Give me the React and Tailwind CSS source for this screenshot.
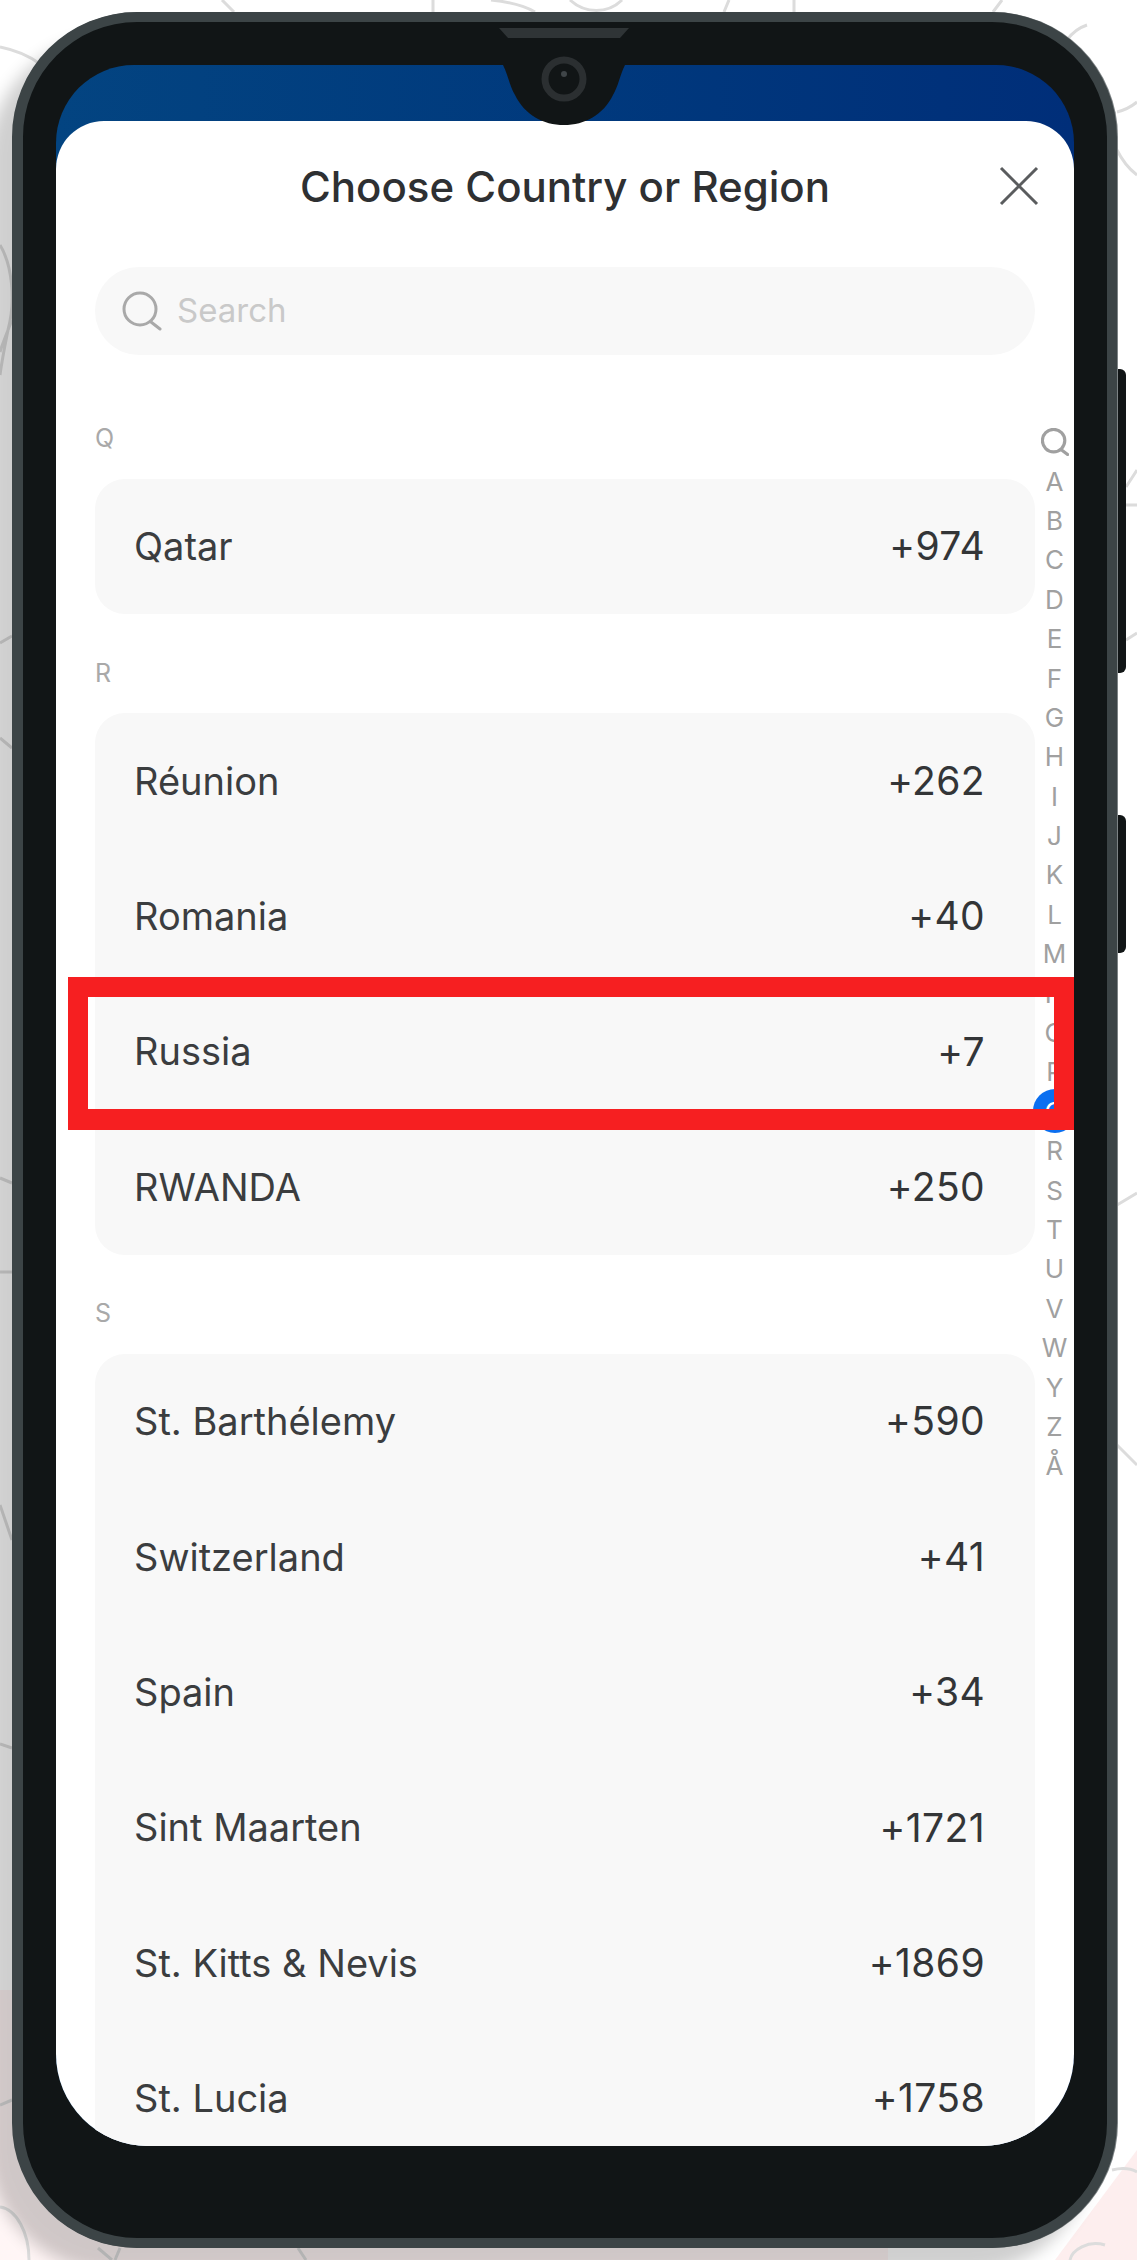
import React from 'react';

const sections = [
  { letter: 'Q', rows: [['Qatar', '+974']] },
  {
    letter: 'R',
    rows: [
      ['Réunion', '+262'],
      ['Romania', '+40'],
      ['Russia', '+7'],
      ['RWANDA', '+250'],
    ],
  },
  {
    letter: 'S',
    rows: [
      ['St. Barthélemy', '+590'],
      ['Switzerland', '+41'],
      ['Spain', '+34'],
      ['Sint Maarten', '+1721'],
      ['St. Kitts & Nevis', '+1869'],
      ['St. Lucia', '+1758'],
    ],
  },
];

const railLetters = 'ABCDEFGHIJKLMNOPQRSTUVWYZÅ'.split('');

const Backdrop = () => (
  <svg className="absolute inset-0" width="1137" height="2260" viewBox="0 0 1137 2260" fill="none">
    <path d="M0 1990H888V2260H0Z" fill="#fff5f5" />
    <path d="M0 2207C16 2209 29 2232 29 2260H0Z" fill="#fff6f6" />
    <path d="M1055 2260L1137 2150V2260Z" fill="#fdeeee" />
    <g stroke="#dcdcdc" strokeWidth="3">
      <path d="M222 0L234 12M433 0V12M491 0C510 2 525 6 535 12" />
      <path d="M570 0C585 14 608 14 622 0M729 0L724 12M794 0V12M1002 0L993 12" />
      <path d="M1087 25C1078 28 1072 33 1067 40M1117 112C1125 110 1131 107 1137 102M1117 150C1122 160 1129 169 1137 175" />
      <path d="M0 47C15 50 28 55 40 64" />
      <path d="M0 245C12 265 16 300 8 330C5 345 2 360 0 375M12 320C6 335 2 345 0 352" />
      <path d="M0 643L12 636M0 738L12 748M0 1178L12 1183M0 1272H12M0 1505L12 1540M0 1744L12 1748M0 2105L12 2100" />
      <path d="M0 2207C16 2209 29 2232 29 2260M98 2248L112 2260M120 2248L115 2260M298 2248L306 2260" />
      <path d="M1126 487L1137 470M1126 505H1137M1126 640L1137 633M1117 1205L1137 1193M1117 1445L1137 1465" />
      <path d="M1112 2170C1120 2168 1130 2168 1137 2172M1070 2260C1072 2250 1088 2240 1105 2245" />
    </g>
  </svg>
);

const Notch = () => (
  <svg className="absolute left-[466px] top-[5px]" width="150" height="118" viewBox="0 0 150 118" fill="none">
    <path d="M14 38H136C131 48 129 60 124 68C114 88 96 98 75 98C54 98 36 88 26 68C21 60 19 48 14 38Z" fill="#111516" />
    <path d="M10 1H140L131 11H19Z" fill="#2f3436" />
    <circle cx="75" cy="52" r="19" stroke="#2b2f31" strokeWidth="7" fill="#111516" />
    <circle cx="75" cy="47" r="3" fill="#3f4548" />
  </svg>
);

const SearchGlyph = ({ className, stroke, width }) => (
  <svg className={className} viewBox="0 0 40 40" fill="none" stroke={stroke} strokeWidth={width} strokeLinecap="round">
    <circle cx="18" cy="18" r="16" />
    <path d="M29 31L38 38" />
  </svg>
);

const Row = ({ name, code }) => (
  <div className="h-[135.4px] pl-[39px] pr-[50px] flex items-center justify-between">
    <span className="text-[38px] text-[#3b3d3f]">{name}</span>
    <span className="text-[39px] tracking-[0.4px] text-[#333537]">{code}</span>
  </div>
);

const App = () => (
  <div className="relative w-[1137px] h-[2260px] overflow-hidden bg-white pt-3 pl-3 font-['Inter',sans-serif]">
    <Backdrop />

    <div className="relative w-[1105px] h-[2236px]">
      <div className="absolute right-[-9px] top-[357px] w-[10px] h-[304px] rounded-r-md bg-[#111516]" />
      <div className="absolute right-[-9px] top-[803px] w-[10px] h-[138px] rounded-r-md bg-[#111516]" />

      <div className="relative h-full rounded-[125px] border-[10px] border-l-[11px] border-[#3c4446] bg-[#111516] pt-[43px] pl-[33px] pr-[33px] shadow-[-24px_24px_16px_rgba(0,0,0,0.19),1px_0_0_#7d8385]">
        <div className="h-[2081px] rounded-t-[78px] rounded-b-[92px] overflow-hidden bg-gradient-to-r from-[#034481] to-[#002e79] pt-[56px]">
          <div className="h-full rounded-t-[48px] overflow-hidden bg-white">
            <div className="relative h-[146px] flex items-center justify-center pb-[16px]">
              <h1 className="text-[42px] font-medium text-[#2e3032]">Choose Country or Region</h1>
              <svg className="absolute left-[943px] top-[45px]" width="40" height="40" viewBox="0 0 40 40" fill="none" stroke="#5a5c5e" strokeWidth="3">
                <path d="M2 2L38 38M38 2L2 38" />
              </svg>
            </div>

            <div className="ml-[39px] w-[940px] h-[88px] rounded-[44px] bg-[#f8f8f8] pl-[27px] flex items-center gap-[15px]">
              <SearchGlyph className="w-[40px] h-[40px]" stroke="#a9a9a9" width="3" />
              <span className="text-[33px] text-[#c9c9c9]">Search</span>
            </div>

            <div className="flex">
              <div className="w-[979px] pl-[39px] pt-[64px]">
                {sections.map((section) => (
                  <section key={section.letter} className="mb-[39px]">
                    <div className="h-[40px] mb-[20px] flex items-center text-[25px] text-[#a9a9a9]">{section.letter}</div>
                    <div className="rounded-[30px] bg-[#f8f8f8]">
                      {section.rows.map(([name, code]) => (
                        <Row key={name} name={name} code={code} />
                      ))}
                    </div>
                  </section>
                ))}
              </div>

              <div className="w-[39px] pt-[67px] text-[26px] text-[#a0a0a0]">
                <div className="h-[39.4px] flex items-center justify-center">
                  <SearchGlyph className="w-[28px] h-[28px]" stroke="#a0a0a0" width="4.5" />
                </div>
                {railLetters.map((letter) => (
                  <div key={letter} className="h-[39.4px] flex items-center justify-center">
                    {letter === 'Q' ? (
                      <span className="w-[44px] h-[44px] shrink-0 rounded-full bg-[#0b6ff0] text-white flex items-center justify-center">Q</span>
                    ) : (
                      letter
                    )}
                  </div>
                ))}
              </div>
            </div>
          </div>
        </div>
        <Notch />
      </div>
    </div>

    <div className="absolute left-[68px] top-[977px] w-[1006px] h-[153px] border-[20px] border-b-[21px] border-[#f61f21]" />
  </div>
);

export default App;
